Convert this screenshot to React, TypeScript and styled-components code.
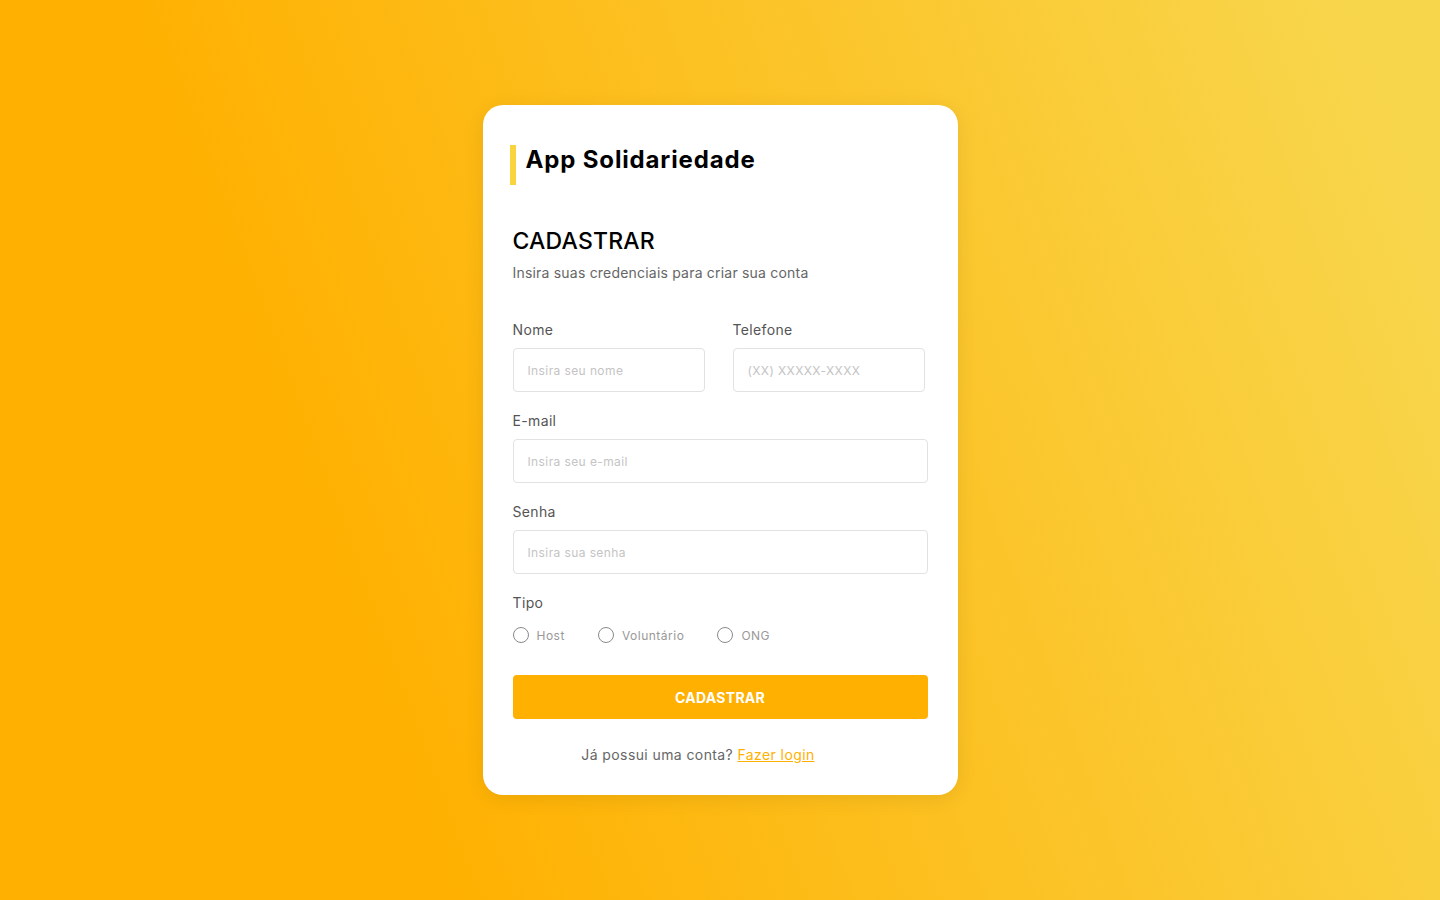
import React from "react";
import styled, { createGlobalStyle } from "styled-components";

const FONT = `Inter, "Open Sans", "DejaVu Sans", sans-serif`;

const GlobalStyle = createGlobalStyle`
  html, body { margin: 0; padding: 0; }
  body { font-family: ${FONT}; }
  * { box-sizing: border-box; }
`;

const Page = styled.div`
  min-height: 100vh;
  display: flex;
  align-items: center;
  justify-content: center;
  background: linear-gradient(70deg, #ffb000 25%, #f8d64c 95%);
`;

const Card = styled.div`
  width: 475px;
  background: #fff;
  border-radius: 20px;
  padding: 40px 30px 30px;
  box-shadow: 0 4px 20px rgba(0, 0, 0, 0.08);
  display: flex;
  flex-direction: column;
`;

const Brand = styled.div`
  height: 40px;
  margin-left: -3px;
  border-left: 6px solid #f9d43f;
  padding-left: 10px;
  display: flex;
  align-items: flex-start;
`;

const BrandTitle = styled.h1`
  margin: 0;
  font-size: 24px;
  line-height: 30px;
  font-weight: 700;
  letter-spacing: 0.85px;
  color: #000;
`;

const Heading = styled.h2`
  margin: 41px 0 0;
  font-size: 23px;
  line-height: 30px;
  font-weight: 500;
  letter-spacing: 0.2px;
  color: #000;
`;

const Subtitle = styled.p`
  margin: 7px 0 0;
  font-size: 14px;
  line-height: 20px;
  letter-spacing: 0.2px;
  color: #666;
`;

const Form = styled.form`
  margin-top: 37px;
  display: flex;
  flex-direction: column;
  gap: 19px;
`;

const Row = styled.div`
  display: grid;
  grid-template-columns: 192px 192px;
  column-gap: 28px;
`;

const Field = styled.div`
  display: flex;
  flex-direction: column;
`;

const Label = styled.label`
  font-size: 14px;
  line-height: 20px;
  font-weight: 400;
  letter-spacing: 0.35px;
  color: #555;
  margin-bottom: 8px;
`;

const Input = styled.input`
  height: 44px;
  width: 100%;
  border: 1px solid #e2e2e2;
  border-radius: 4px;
  padding: 1px 14px 0;
  font-family: ${FONT};
  font-size: 12px;
  letter-spacing: 0.4px;
  color: #333;
  outline: none;
  &::placeholder { color: #c4c4c4; }
`;

const RadioRow = styled.div`
  display: flex;
  align-items: center;
  gap: 33px;
  height: 20px;
  margin-top: 4px;
`;

const RadioOption = styled.label`
  display: flex;
  align-items: center;
  gap: 8px;
  font-size: 12px;
  letter-spacing: 0.5px;
  color: #999;
`;

const RadioCircle = styled.span`
  width: 16px;
  height: 16px;
  border-radius: 50%;
  border: 1px solid #8a8a8a;
`;

const Button = styled.button`
  margin-top: 11px;
  height: 44px;
  width: 100%;
  border: none;
  border-radius: 4px;
  padding-top: 2px;
  background: #ffb000;
  color: #fff;
  font-family: ${FONT};
  font-size: 14px;
  font-weight: 700;
  letter-spacing: 0.3px;
`;

const Footer = styled.p`
  margin: 26px 0 0;
  padding-right: 44px;
  text-align: center;
  font-size: 14px;
  line-height: 20px;
  letter-spacing: 0.4px;
  color: #666;
`;

const Link = styled.a`
  color: #ffb000;
  text-decoration: underline;
`;

export default function App() {
  return (
    <>
      <GlobalStyle />
      <Page>
        <Card>
          <Brand>
            <BrandTitle>App Solidariedade</BrandTitle>
          </Brand>
          <Heading>CADASTRAR</Heading>
          <Subtitle>Insira suas credenciais para criar sua conta</Subtitle>
          <Form onSubmit={(e) => e.preventDefault()}>
            <Row>
              <Field>
                <Label>Nome</Label>
                <Input placeholder="Insira seu nome" />
              </Field>
              <Field>
                <Label>Telefone</Label>
                <Input placeholder="(XX) XXXXX-XXXX" />
              </Field>
            </Row>
            <Field>
              <Label>E-mail</Label>
              <Input placeholder="Insira seu e-mail" />
            </Field>
            <Field>
              <Label>Senha</Label>
              <Input type="password" placeholder="Insira sua senha" />
            </Field>
            <Field>
              <Label>Tipo</Label>
              <RadioRow>
                <RadioOption><RadioCircle />Host</RadioOption>
                <RadioOption><RadioCircle />Voluntário</RadioOption>
                <RadioOption><RadioCircle />ONG</RadioOption>
              </RadioRow>
            </Field>
            <Button type="submit">CADASTRAR</Button>
          </Form>
          <Footer>
            Já possui uma conta? <Link href="#">Fazer login</Link>
          </Footer>
        </Card>
      </Page>
    </>
  );
}
